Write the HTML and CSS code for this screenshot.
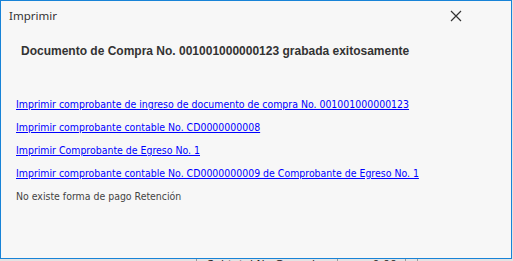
FILE: index.html
```html
<!DOCTYPE html>
<html lang="es">
<head>
    <meta charset="UTF-8">
    <title>Imprimir</title>
    <link rel="stylesheet" href="styles.css">
</head>
<body>
    <div class="dialog">
        <div class="title-bar">
            <span class="title">Imprimir</span>
            <svg class="close" width="12" height="12" viewBox="0 0 12 12">
                <path d="M1 1 L11 11 M11 1 L1 11" stroke="#333" stroke-width="1.2" fill="none"/>
            </svg>
        </div>
        <div class="content">
            <h1>Documento de Compra No. 001001000000123 grabada exitosamente</h1>
            <ul class="links">
                <li><a href="#">Imprimir comprobante de ingreso de documento de compra No. 001001000000123</a></li>
                <li><a href="#">Imprimir comprobante contable No. CD0000000008</a></li>
                <li><a href="#">Imprimir Comprobante de Egreso No. 1</a></li>
                <li><a href="#">Imprimir comprobante contable No. CD0000000009 de Comprobante de Egreso No. 1</a></li>
                <li class="note">No existe forma de pago Retención</li>
            </ul>
        </div>
    </div>
    <div class="behind">
        <div class="cell label">Subtotal No Gravado:</div>
        <div class="cell value">0.00</div>
        <div class="cell tail"></div>
    </div>
</body>
</html>
```

FILE: styles.css
```css
html, body {
    margin: 0;
    padding: 0;
    overflow: hidden;
}

body {
    background-color: #e3e3e3;
    width: 513px;
    height: 261px;
}

.dialog {
    box-sizing: border-box;
    width: 512px;
    height: 259px;
    border: 1px solid #1883d7;
    background-color: #f7f7f7;
}

.title-bar {
    height: 30px;
    display: flex;
    align-items: center;
    justify-content: space-between;
    padding: 0 49px 0 8px;
}

.title {
    font-family: 'Noto Sans', 'Liberation Sans', sans-serif;
    font-size: 11.5px;
    color: #333;
    margin-top: -1px;
}

.close {
    margin-top: -1px;
}

.content {
    padding: 0 0 0 15px;
}

h1 {
    font-family: 'Liberation Sans', Arial, sans-serif;
    font-size: 12px;
    font-weight: bold;
    color: #333;
    margin: 12px 0 0 5px;
    line-height: 16px;
}

.links {
    list-style: none;
    margin: 38px 0 0 0;
    padding: 0;
    font-family: 'DejaVu Sans Condensed', 'DejaVu Sans', sans-serif;
    font-size: 10.45px;
}

.links li {
    height: 23.1px;
    line-height: 14px;
}

.links a {
    color: #0000ff;
    text-decoration: underline;
}

.links .note {
    color: #444;
}

.behind {
    display: flex;
    height: 2px;
    font-family: 'DejaVu Sans', sans-serif;
    font-size: 11px;
    line-height: 11px;
    overflow: hidden;
    margin-left: 196px;
}

.cell {
    border-left: 1px solid #999;
    padding-left: 10px;
    color: #222;
}

.label {
    width: 130px;
}

.value {
    width: 49px;
    text-align: right;
    padding-right: 8px;
}

.tail {
    width: 1px;
    border-right: 1px solid #999;
}
```
